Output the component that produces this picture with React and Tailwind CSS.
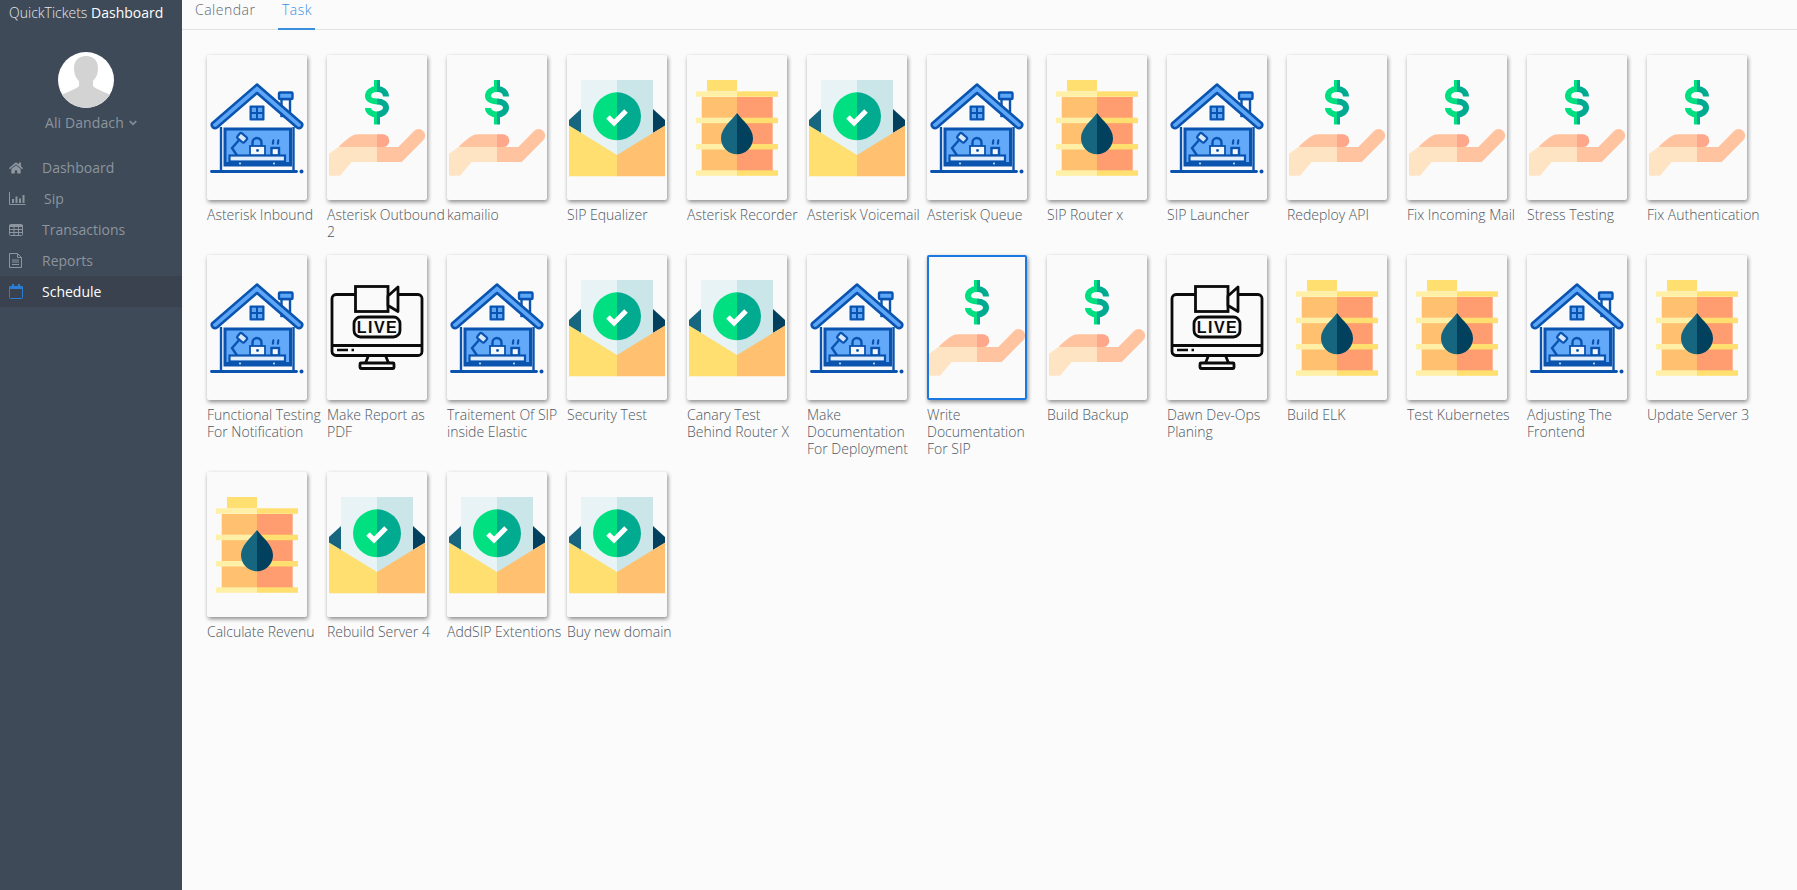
import React from "react";
import { FaHome, FaAngleDown } from "react-icons/fa";

const D = "#0a54b0";

function House() {
  return (
    <svg viewBox="0 0 100 145" className="block w-full h-full">
      <rect x="74.500" y="44" width="8.500" height="17" fill="#fafafa" stroke={D} strokeWidth="2.400" />
      <rect x="72" y="37.500" width="13.500" height="6.500" rx="1" fill="#5ea6f8" stroke={D} strokeWidth="2.400" />
      <path d="M14 72V116M86.500 72V116" stroke={D} strokeWidth="2.400" fill="none" />
      <path d="M50 29.500L95 68.500Q96 70.500 94 72.500Q92 73.800 90 72.500L50 38L10 72.500Q8 73.800 6 72.500Q4 70.500 5 68.500Z" fill="#5ea6f8" stroke={D} strokeWidth="2.600" strokeLinejoin="round" />
      <rect x="42.500" y="50.500" width="15" height="15" rx="1" fill={D} />
      <path d="M44.800 52.800h4.200v4.200h-4.200zM51 52.800h4.200v4.200H51zM44.800 59h4.200v4.200h-4.200zM51 59h4.200v4.200H51z" fill="#5ea6f8" />
      <rect x="18" y="74" width="65.500" height="36" fill="#62a9fa" stroke={D} strokeWidth="3" />
      <path d="M30 100.500L25 93L33 84" stroke={D} strokeWidth="2.400" fill="none" />
      <rect x="30.500" y="79.500" width="9" height="6.500" rx="1.500" transform="rotate(40 35 83)" fill="#d9e9fb" stroke={D} strokeWidth="2.200" />
      <path d="M45.500 92V87.500A4.500 4.500 0 0 1 54.500 87.500V92Z" fill="#62a9fa" stroke={D} strokeWidth="2.400" />
      <rect x="43" y="91" width="15" height="9.500" fill="#f4f8fd" stroke={D} strokeWidth="1.800" />
      <circle cx="50.500" cy="95.500" r="1.400" fill={D} />
      <rect x="64.500" y="93" width="7.500" height="7.500" fill="#f4f8fd" stroke={D} strokeWidth="2.400" />
      <path d="M66 84.500c1 1.500-.5 3 0 5M71 84.500c1 1.500-.5 3 0 5" stroke={D} strokeWidth="2.200" fill="none" />
      <rect x="22.500" y="100.500" width="55.500" height="6" fill="#e0edfc" stroke={D} strokeWidth="2.200" />
      <rect x="18" y="107" width="65" height="3.500" fill={D} />
      <circle cx="33" cy="108.500" r="1" fill="#d9e9fb" />
      <circle cx="67" cy="108.500" r="1" fill="#d9e9fb" />
      <path d="M4.500 116.500H89.500" stroke={D} strokeWidth="2.800" strokeLinecap="round" />
      <circle cx="94.500" cy="116.500" r="2" fill={D} />
    </svg>
  );
}

function Hand() {
  const s = "M59 41.500C59 37 55 34 50.500 34H49.500C45 34 41 37 41 41C41 44 44 46.500 50 46.500C56 46.500 59 49.500 59 52.500C59 56.500 55 59.500 50 59.500C45 59.500 41 56.500 41 53M50 25V34M50 59.500V69.500";
  return (
    <svg viewBox="0 0 100 145" className="block w-full h-full">
      <defs>
        <clipPath id="handL"><rect x="0" y="0" width="50" height="145" /></clipPath>
        <clipPath id="handR"><rect x="50" y="0" width="50" height="145" /></clipPath>
      </defs>
      <path d={s} fill="none" stroke="#00e080" strokeWidth="6" clipPath="url(#handL)" />
      <path d={s} fill="none" stroke="#00ab8f" strokeWidth="6" clipPath="url(#handR)" />
      <path d="M11.500 92C20 84 25 79.300 31 79.300H50V92Z" fill="#ffc49f" />
      <path d="M50 79.300H56A6.350 6.350 0 0 1 56 92H50Z" fill="#ffa78a" />
      <path d="M2 98.700L11.500 92H50V107H24.700L13 120.700H2Z" fill="#ffe4c4" />
      <path d="M50 92H71.300L87 76A6.500 6.500 0 0 1 96.300 85.200L74.700 107H50Z" fill="#ffc49f" />
    </svg>
  );
}

function Envelope() {
  return (
    <svg viewBox="0 0 100 145" className="block w-full h-full">
      <path d="M2 65L14 54V78L2 71Z" fill="#16667f" />
      <path d="M98 65L86 54V78L98 71Z" fill="#02415e" />
      <path d="M14 25H50V101H14Z" fill="#e8f3f6" />
      <path d="M50 25H86V101H50Z" fill="#cae6e9" />
      <path d="M50 37.300A24 24 0 0 0 50 85.300Z" fill="#00e080" />
      <path d="M50 37.300A24 24 0 0 1 50 85.300Z" fill="#00ab8f" />
      <path d="M41 62L47 68L59 56" fill="none" stroke="#fff" strokeWidth="5" />
      <path d="M2 70.500L50 100V121.300H2Z" fill="#ffdf6f" />
      <path d="M98 70.500L50 100V121.300H98Z" fill="#ffc070" />
    </svg>
  );
}

function Barrel() {
  const ys = [36.3, 62.7, 89, 115.3];
  return (
    <svg viewBox="0 0 100 145" className="block w-full h-full">
      <rect x="20" y="25" width="30" height="11.300" fill="#ffdf6f" />
      <rect x="14.700" y="42" width="35.300" height="74" fill="#ffc070" />
      <rect x="50" y="42" width="35.700" height="74" fill="#ff9c70" />
      {ys.map((y) => (
        <g key={y}>
          <rect x="9" y={y} width="41" height="5.500" fill="#fff0a8" />
          <rect x="50" y={y} width="41" height="5.500" fill="#ffdf6f" />
        </g>
      ))}
      <path d="M50 58C44 66 34 73 34 83.300A16 16 0 0 0 50 99.300Z" fill="#16667f" />
      <path d="M50 58C56 66 66 73 66 83.300A16 16 0 0 1 50 99.300Z" fill="#02415e" />
    </svg>
  );
}

function Live() {
  const k = "#0b0b0b";
  return (
    <svg viewBox="0 0 100 145" className="block w-full h-full">
      <rect x="5" y="39.500" width="90" height="61" rx="4" fill="none" stroke={k} strokeWidth="2.800" />
      <path d="M5 90.500H95" stroke={k} strokeWidth="2.800" />
      <path d="M10 95H21M24.500 95H27" stroke={k} strokeWidth="2.400" />
      <rect x="28.500" y="31.500" width="32.500" height="25" fill="#fafafa" stroke={k} strokeWidth="2.800" />
      <path d="M61 41L71 32V56.500L61 50.500Z" fill="#fafafa" stroke={k} strokeWidth="2.800" strokeLinejoin="round" />
      <rect x="27" y="62" width="46" height="20" rx="6.500" fill="#fafafa" stroke={k} strokeWidth="2.800" />
      <text x="50.500" y="77.500" textAnchor="middle" fontFamily="'Liberation Sans', sans-serif" fontWeight="700" fontSize="16" letterSpacing="1.500" fill={k}>LIVE</text>
      <path d="M41.500 100.500L38.500 108M58.500 100.500L61.500 108" stroke={k} strokeWidth="2.800" />
      <rect x="33" y="108" width="34" height="5.500" rx="1" fill="none" stroke={k} strokeWidth="2.800" />
    </svg>
  );
}

const ICONS = { house: House, hand: Hand, env: Envelope, barrel: Barrel, live: Live };

const TASKS = [
  ["house", "Asterisk Inbound"],
  ["hand", "Asterisk Outbound 2"],
  ["hand", "kamailio"],
  ["env", "SIP Equalizer"],
  ["barrel", "Asterisk Recorder"],
  ["env", "Asterisk Voicemail"],
  ["house", "Asterisk Queue"],
  ["barrel", "SIP Router x"],
  ["house", "SIP Launcher"],
  ["hand", "Redeploy API"],
  ["hand", "Fix Incoming Mail"],
  ["hand", "Stress Testing"],
  ["hand", "Fix Authentication"],
  ["house", "Functional Testing For Notification"],
  ["live", "Make Report as PDF"],
  ["house", "Traitement Of SIP inside Elastic"],
  ["env", "Security Test"],
  ["env", "Canary Test Behind Router X"],
  ["house", "Make Documentation For Deployment"],
  ["hand", "Write Documentation For SIP", true],
  ["hand", "Build Backup"],
  ["live", "Dawn Dev-Ops Planing"],
  ["barrel", "Build ELK"],
  ["barrel", "Test Kubernetes"],
  ["house", "Adjusting The Frontend"],
  ["barrel", "Update Server 3"],
  ["barrel", "Calculate Revenu"],
  ["env", "Rebuild Server 4"],
  ["env", "AddSIP Extentions"],
  ["env", "Buy new domain"],
];

const C = "#8c959f";

function HomeIcon() {
  return <FaHome size={14} color="#8f98a2" />;
}
function ChartIcon() {
  return (
    <svg width="17" height="14" viewBox="0 0 17 14" fill="none">
      <path d="M.5 0V12.500H16.500" stroke={C} />
      <path d="M3 7h2v4H3zM6.500 4.500h2V11h-2zM10 6.500h2V11h-2zM13.500 3h2v8h-2z" fill={C} />
    </svg>
  );
}
function TableIcon() {
  return (
    <svg width="14" height="12" viewBox="0 0 14 12" fill="none">
      <rect x=".5" y=".5" width="13" height="11" rx="1" stroke={C} />
      <path d="M0 1h14v2H0z" fill={C} />
      <path d="M5 3V11M9.500 3V11M1 5.500H13M1 8.500H13" stroke={C} />
    </svg>
  );
}
function FileIcon() {
  return (
    <svg width="13" height="15" viewBox="0 0 13 15" fill="none">
      <path d="M.5.5H8.500L12.500 4.500V14.500H.5Z" stroke={C} />
      <path d="M8.500.5V4.500H12.500M3 7H10M3 9H10M3 11.500H10" stroke={C} />
    </svg>
  );
}
function CalendarIcon() {
  return (
    <svg width="14" height="15" viewBox="0 0 14 15" fill="none">
      <rect x=".5" y="2.500" width="13" height="12" rx="1" stroke="#2a7fd5" />
      <path d="M0 2.500h14V5H0z" fill="#2a7fd5" />
      <path d="M3 0h2v3.500H3zM9 0h2v3.500H9z" fill="#2a7fd5" />
    </svg>
  );
}

const MENU = [
  [HomeIcon, "Dashboard"],
  [ChartIcon, "Sip"],
  [TableIcon, "Transactions"],
  [FileIcon, "Reports"],
  [CalendarIcon, "Schedule", true],
];

function Task({ type, title, active }) {
  const Icon = ICONS[type];
  return (
    <div className="w-[120px] mb-[15px]">
      <div className={"w-[100px] h-[145px] bg-[#fafafa] rounded-[2px] shadow-[1px_2px_4px_rgba(0,0,0,0.45)] " + (active ? "outline-2 -outline-offset-2 outline-[#1a78e0]" : "")}>
        <Icon />
      </div>
      <div className="mt-[6px] text-[14px] leading-[17px] font-light text-[#4d5761]">{title}</div>
    </div>
  );
}

export default function App() {
  return (
    <div className="flex h-screen bg-[#fbfbfb] font-['Open_Sans',sans-serif]">
      <aside className="w-[182px] shrink-0 bg-[#3e4a57]">
        <div className="h-[27px] pl-[9px] text-[14px] leading-[26px] whitespace-nowrap font-light text-[#e6e9ec]">
          QuickTickets <span className="font-normal text-white">Dashboard</span>
        </div>
        <div className="flex justify-center pr-[10px] mt-[25px]">
          <div className="w-[56px] h-[56px] rounded-full bg-white overflow-hidden">
            <svg viewBox="0 0 56 56" className="block w-full h-full">
              <path d="M28 4C20 4 16 9 16 16C16 22 18 26 21 29V34C17 38 8 40 2 44V56H54V44C48 40 39 38 35 34V29C38 26 40 22 40 16C40 9 36 4 28 4Z" fill="#d3d3d3" />
            </svg>
          </div>
        </div>
        <div className="flex items-center gap-[3px] pl-[45px] mt-[5px] text-[14px] leading-[20px] text-[#8c959f]">
          <span className="tracking-[0.1px]">Ali Dandach</span> <FaAngleDown className="text-[12px] text-[#7f8994]" />
        </div>
        <nav className="mt-[19px]">
          {MENU.map(([Icon, label, active]) => (
            <div key={label} className={"flex items-center h-[31px] pl-[9px] text-[14px] " + (active ? "bg-[#39424e] text-white" : "text-[#8c959f]")}>
              <span className="w-[33px] shrink-0 flex items-center">
                <Icon />
              </span>
              <span className={label === "Sip" ? "ml-[2px]" : ""}>{label}</span>
            </div>
          ))}
        </nav>
      </aside>
      <main className="flex-1 min-w-0">
        <div className="flex h-[30px] border-b border-[#dfe3e6] pl-[13px] text-[14px] font-light">
          <div className="leading-[20px] text-[#5f6973] mr-[23px] tracking-[0.5px]">Calendar</div>
          <div className="w-[37px] h-[30px] text-center leading-[20px] text-[#3a8fdc] border-b-[2px] border-[#3a8fdc] tracking-[0.5px]">Task</div>
        </div>
        <div className="flex flex-wrap pl-[25px] pt-[25px]">
          {TASKS.map(([type, title, active]) => (
            <Task key={title} type={type} title={title} active={active} />
          ))}
        </div>
      </main>
    </div>
  );
}
